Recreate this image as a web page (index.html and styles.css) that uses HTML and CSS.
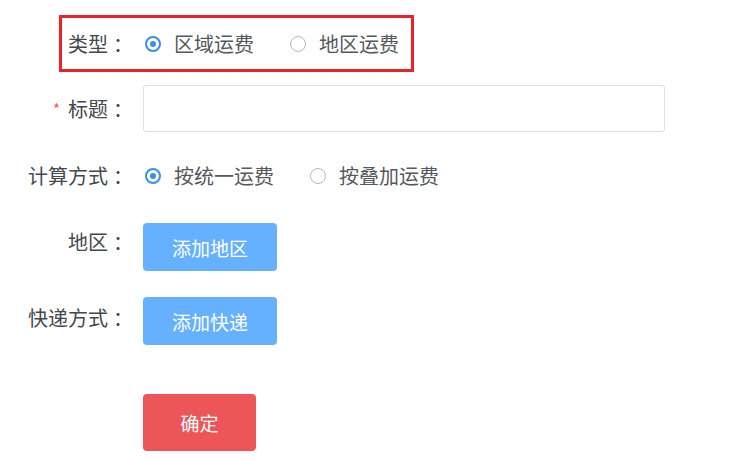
FILE: index.html
```html
<!DOCTYPE html>
<html lang="zh">
<head>
<meta charset="utf-8">
<link rel="stylesheet" href="styles.css">
</head>
<body>
<form class="form">
  <div class="row row-type">
    <div class="highlight"></div>
    <label class="label">类型<span class="colon">：</span></label>
    <div class="content radios">
      <span class="radio checked"><span class="dot"></span></span><span class="radio-text">区域运费</span>
      <span class="radio"><span class="dot"></span></span><span class="radio-text">地区运费</span>
    </div>
  </div>
  <div class="row row-title">
    <label class="label"><span class="req">*</span>标题<span class="colon">：</span></label>
    <div class="content">
      <input class="input" type="text">
    </div>
  </div>
  <div class="row row-calc">
    <label class="label">计算方式<span class="colon">：</span></label>
    <div class="content radios">
      <span class="radio checked"><span class="dot"></span></span><span class="radio-text">按统一运费</span>
      <span class="radio"><span class="dot"></span></span><span class="radio-text">按叠加运费</span>
    </div>
  </div>
  <div class="row row-btn row-region">
    <label class="label">地区<span class="colon">：</span></label>
    <div class="content">
      <button type="button" class="btn btn-blue">添加地区</button>
    </div>
  </div>
  <div class="row row-btn row-express">
    <label class="label">快递方式<span class="colon">：</span></label>
    <div class="content">
      <button type="button" class="btn btn-blue">添加快递</button>
    </div>
  </div>
  <div class="row row-submit">
    <div class="label"></div>
    <div class="content">
      <button type="button" class="btn btn-red">确定</button>
    </div>
  </div>
</form>
</body>
</html>
```

FILE: styles.css
```css
* { box-sizing: border-box; }
html, body {
  margin: 0;
  padding: 0;
  background: #ffffff;
}
body {
  width: 750px;
  height: 460px;
  overflow: hidden;
  font-family: "Noto Sans CJK SC", "Microsoft YaHei", sans-serif;
  font-size: 20px;
  color: #555a60;
}
.form {
  padding-top: 20px;
}
.row {
  display: flex;
  align-items: center;
  position: relative;
}
.label {
  width: 128px;
  flex: none;
  text-align: right;
  padding-right: 0;
  color: #45484d;
  line-height: 47px;
  white-space: nowrap;
}
.colon {
  margin-left: 5px;
  margin-right: -5px;
}
.content {
  margin-left: 15px;
  display: flex;
  align-items: center;
}
.row-type { height: 47px; }
.row-title { margin-top: 18px; height: 47px; }
.row-calc { margin-top: 20px; height: 47px; }
.row-btn { align-items: flex-start; }
.row-btn .label { line-height: 38px; }
.row-region { margin-top: 24px; }
.row-express { margin-top: 26px; }
.row-express .label { line-height: 42px; }
.row-submit { margin-top: 49px; }

.highlight {
  position: absolute;
  left: 59px;
  top: -5px;
  width: 355px;
  height: 57px;
  border: 3px solid #e8232a;
  pointer-events: none;
}
.req {
  color: #f0575a;
  font-size: 15px;
  margin-right: 8px;
  vertical-align: 2px;
}
.radio {
  width: 16px;
  height: 16px;
  border: 1.5px solid #b4b7bc;
  border-radius: 50%;
  display: inline-flex;
  align-items: center;
  justify-content: center;
  background: #fff;
  margin-left: 2px;
}
.radio.checked {
  border: 2px solid #3a8ee6;
}
.radio.checked .dot {
  width: 6px;
  height: 6px;
  border-radius: 50%;
  background: #3a8ee6;
}
.radio-text {
  margin-left: 13px;
  margin-right: 34px;
  color: #55585d;
}
.input {
  width: 522px;
  height: 47px;
  border: 1px solid #dcdfe4;
  border-radius: 3px;
  outline: none;
  background: #fff;
  font: inherit;
}
.btn {
  border: none;
  border-radius: 4px;
  color: #ffffff;
  font-family: inherit;
  font-size: 19px;
  padding: 0;
  cursor: pointer;
}
.btn-blue {
  width: 134px;
  height: 48px;
  background: #66b1ff;
}
.btn-red {
  width: 113px;
  height: 57px;
  background: #ec5659;
}
```
